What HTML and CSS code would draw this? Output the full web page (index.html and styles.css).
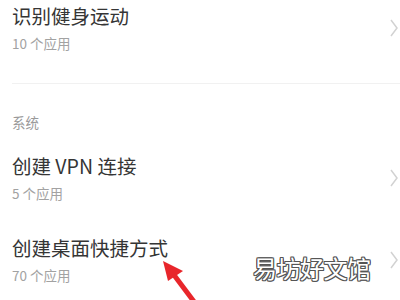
FILE: index.html
```html
<!DOCTYPE html>
<html>
<head>
	<meta charset="utf-8">
	<link rel="stylesheet" href="styles.css">
	<title>更多设置</title>
</head>
<body>
	<div class="list">
		<div class="row">
			<div class="texts">
				<div class="title">识别健身运动</div>
				<div class="sub">10 个应用</div>
			</div>
			<svg class="chev" width="8" height="18" viewBox="0 0 8 18"><path d="M1 1 L7 9 L1 17" fill="none" stroke="#d2d2d2" stroke-width="1.5"/></svg>
		</div>
		<div class="divider"></div>

		<div class="section">系统</div>

		<div class="row">
			<div class="texts">
				<div class="title">创建 VPN 连接</div>
				<div class="sub">5 个应用</div>
			</div>
			<svg class="chev" width="8" height="18" viewBox="0 0 8 18"><path d="M1 1 L7 9 L1 17" fill="none" stroke="#d2d2d2" stroke-width="1.5"/></svg>
		</div>
		<div class="row">
			<div class="texts">
				<div class="title">创建桌面快捷方式</div>
				<div class="sub">70 个应用</div>
			</div>
			<svg class="chev" width="8" height="18" viewBox="0 0 8 18"><path d="M1 1 L7 9 L1 17" fill="none" stroke="#d2d2d2" stroke-width="1.5"/></svg>
		</div>
	</div>

	<!-- flèche rouge par dessus la capture -->
	<svg class="arrow" width="50" height="45" viewBox="0 0 50 45">
		<path d="M13 2 L33 12 L18 22 Z" fill="#e8262b"/>
		<path d="M24 16 L45 44" stroke="#e8262b" stroke-width="5" fill="none"/>
	</svg>

	<div class="watermark">易坊好文馆</div>
</body>
</html>
```

FILE: styles.css
```css
body {
	margin: 0;
	background-color: #ffffff;
	font-family: "Noto Sans CJK SC", "Noto Sans", sans-serif;
	overflow: hidden;
}

.list {
	margin-top: -13px; /* la capture est un peu défilée */
}

.row {
	display: flex;
	align-items: center;
	height: 82px;
	padding: 0 2px 0 12px;
	box-sizing: border-box;
}
.texts {
	flex: 1;
}
.title {
	font-size: 19.5px;
	line-height: 24px;
	color: #353535;
}
.sub {
	margin-top: 6px;
	font-size: 13.5px;
	line-height: 18px;
	color: #a2a2a2;
}
.chev {
	display: block;
}

.divider {
	height: 1px;
	margin: 14px 0 0 12px;
	background-color: #f1f1f1;
}

.section {
	padding: 29px 0 6px 12px;
	font-size: 13.5px;
	line-height: 18px;
	color: #9a9a9a;
}

.arrow {
	position: absolute;
	left: 150px;
	top: 259px;
}

.watermark {
	position: absolute;
	left: 253px;
	top: 253px;
	font-size: 24px;
	line-height: 30px;
	color: #ffffff;
	letter-spacing: -0.5px;
	text-shadow: 1px 0 0 #555, -1px 0 0 #555, 0 1px 0 #555, 0 -1px 0 #555,
		1px 1px 0 #555, -1px -1px 0 #555, 1px -1px 0 #555, -1px 1px 0 #555;
}
```
